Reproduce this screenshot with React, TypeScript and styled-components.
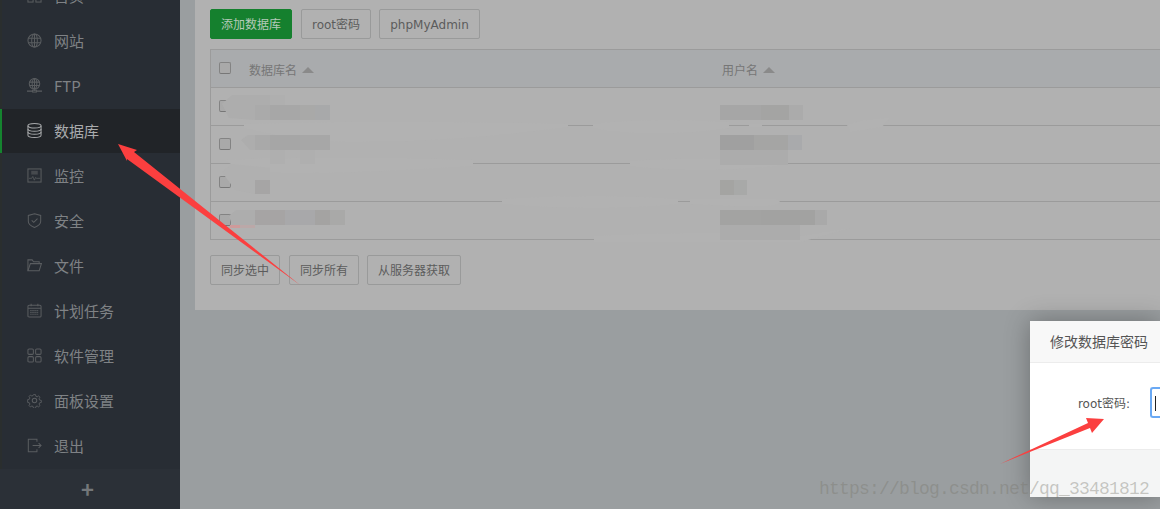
import React from "react";
import styled, { createGlobalStyle } from "styled-components";

const GlobalStyle = createGlobalStyle`
  html, body {
    margin: 0;
    padding: 0;
    height: 509px;
    overflow: hidden;
    background: #9a9ea0;
    font-family: "Noto Sans CJK SC", "Open Sans", sans-serif;
  }
`;

const Page = styled.div`
  position: relative;
  display: flex;
  width: 1160px;
  height: 509px;
  overflow: hidden;
  background: #9a9ea0;
`;

const Sidebar = styled.aside`
  display: flex;
  flex-direction: column;
  flex: 0 0 180px;
  height: 509px;
  overflow: hidden;
  background: #282d34;
`;

const Nav = styled.nav`
  flex: 1;
  margin-top: -26px;
  border-left: 2px solid #2a2e2e;
`;

const NavItem = styled.div<{ $active?: boolean }>`
  display: flex;
  align-items: center;
  gap: 11px;
  box-sizing: border-box;
  height: ${(p) => (p.$active ? "44px" : "45px")};
  margin-bottom: ${(p) => (p.$active ? "1px" : "0")};
  margin-left: ${(p) => (p.$active ? "-2px" : "0")};
  padding: ${(p) => (p.$active ? "0 0 1px 25px" : "0 0 2px 25px")};
  border-left: ${(p) => (p.$active ? "2px solid #15842f" : "0")};
  background: ${(p) => (p.$active ? "#212428" : "transparent")};
  color: ${(p) => (p.$active ? "#a9abad" : "#7f8285")};
  font-size: 15px;

  svg {
    flex: 0 0 15px;
    width: 15px;
    height: 15px;
    margin-right: 1px;
    color: ${(p) => (p.$active ? "#a5a7a9" : "#5a5d60")};
  }
`;

const SideFooter = styled.div`
  display: flex;
  flex: 0 0 41px;
  align-items: center;
  justify-content: center;
  box-sizing: border-box;
  padding: 0 5px 4px 0;
  background: #2b3037;
  color: #74777a;
  font-size: 22px;
  font-weight: 700;
`;

const Main = styled.main`
  flex: 1;
  padding-left: 15px;
`;

const Card = styled.section`
  height: 310px;
  box-sizing: border-box;
  padding: 9px 0 0 15px;
  background: #b1b1b1;
`;

const Toolbar = styled.div`
  display: flex;
  gap: 8px;
  height: 30px;

  & > :first-child {
    margin-right: 1px;
  }
`;

const Button = styled.div<{ $primary?: boolean; $w: number }>`
  display: flex;
  align-items: center;
  justify-content: center;
  box-sizing: border-box;
  width: ${(p) => p.$w}px;
  height: 30px;
  padding-top: 2px;
  border: 1px solid ${(p) => (p.$primary ? "#15802e" : "#999a9a")};
  border-radius: 2px;
  background: ${(p) => (p.$primary ? "#15802e" : "transparent")};
  color: ${(p) => (p.$primary ? "#b5c9b9" : "#5c5c5c")};
  font-family: "DejaVu Sans", "Noto Sans CJK SC", sans-serif;
  font-size: 12px;
  line-height: 18px;
  white-space: nowrap;
`;

const Table = styled.div`
  margin-top: 10px;
  border: solid #9b9b9b;
  border-width: 1px 0 1px 1px;
`;

const Row = styled.div<{ $head?: boolean }>`
  display: flex;
  align-items: center;
  gap: 18px;
  box-sizing: border-box;
  height: 38px;
  padding-left: 8px;
  background: ${(p) => (p.$head ? "#a9abad" : "transparent")};
  border-bottom: 1px solid #9b9b9b;
  color: #767676;
  font-size: 12px;

  &:last-child {
    border-bottom: 0;
    height: 37px;
  }
`;

const Check = styled.span`
  flex: 0 0 12px;
  box-sizing: border-box;
  width: 12px;
  height: 12px;
  margin-top: -2px;
  border: 1px solid #838383;
  border-bottom-color: #777;
  border-radius: 2px;
  background: #a9a9a9;
`;

const NameCell = styled.div`
  display: flex;
  align-items: center;
  gap: 5px;
  width: 455px;
  padding-top: 2px;
`;

const SortCaret = styled.span`
  width: 0;
  height: 0;
  border: solid transparent;
  border-width: 0 6px 6px;
  border-bottom-color: #8a8a8a;
`;

const Footer = styled(Toolbar)`
  margin-top: 15px;
`;

const Smudges = styled.svg`
  position: absolute;
  top: 0;
  left: 0;
  pointer-events: none;
`;

const Modal = styled.div`
  position: absolute;
  top: 321px;
  left: 1030px;
  display: flex;
  flex-direction: column;
  width: 130px;
  height: 176px;
  overflow: hidden;
  background: #fff;
  box-shadow: 0 0 24px rgba(0, 0, 0, 0.3);
`;

const ModalTitle = styled.div`
  box-sizing: border-box;
  flex: 0 0 42px;
  padding-left: 20px;
  border-bottom: 1px solid #ececec;
  background: #f8f8f8;
  color: #555;
  font-size: 14px;
  line-height: 41px;
  white-space: nowrap;
`;

const ModalBody = styled.div`
  display: flex;
  flex: 1;
  align-items: center;
  justify-content: flex-end;
  padding-bottom: 7px;
`;

const FieldLabel = styled.label`
  margin: 2px 20px 0 0;
  color: #555;
  font-family: "DejaVu Sans", "Noto Sans CJK SC", sans-serif;
  font-size: 12px;
  line-height: 18px;
  white-space: nowrap;
`;

const Input = styled.div`
  box-sizing: border-box;
  flex: 0 0 10px;
  width: 10px;
  height: 31px;
  padding: 7px 0 0 3px;
  border: solid #6aa9f4;
  border-width: 2px 0 2px 2px;
  border-radius: 3px 0 0 3px;
`;

const Caret = styled.span`
  display: block;
  width: 1px;
  height: 15px;
  background: #222;
`;

const ModalFooter = styled.div`
  flex: 0 0 47px;
  border-top: 1px solid #ececec;
  background: #f4f5f5;
`;

const Watermark = styled.div`
  position: absolute;
  top: 478px;
  left: 819px;
  color: rgba(120, 118, 108, 0.38);
  font-family: "Liberation Mono", monospace;
  font-size: 18px;
  letter-spacing: -0.8px;
  line-height: 22px;
  white-space: nowrap;
`;

const Arrows = styled.svg`
  position: absolute;
  top: 0;
  left: 0;
  pointer-events: none;
`;

const Icon = ({ children }: { children: React.ReactNode }) => (
  <svg viewBox="0 0 16 16" fill="none" stroke="currentColor" strokeWidth="1.1">
    {children}
  </svg>
);

const navItems: { label: string; icon: React.ReactNode; active?: boolean }[] = [
  {
    label: "首页",
    icon: (
      <Icon>
        <rect x="1" y="1" width="5.5" height="5.5" />
        <rect x="9.5" y="1" width="5.5" height="5.5" />
        <rect x="1" y="9.5" width="5.5" height="5.5" />
        <rect x="9.5" y="9.5" width="5.5" height="5.5" />
      </Icon>
    ),
  },
  {
    label: "网站",
    icon: (
      <Icon>
        <circle cx="8" cy="8" r="7" />
        <ellipse cx="8" cy="8" rx="3" ry="7" />
        <path d="M8 1v14M1.4 5.5h13.2M1.4 10.5h13.2" />
      </Icon>
    ),
  },
  {
    label: "FTP",
    icon: (
      <Icon>
        <circle cx="8" cy="6.2" r="5.6" />
        <ellipse cx="8" cy="6.2" rx="2.5" ry="5.6" />
        <path d="M8 .6v11.2M2.8 4.4h10.4M2.8 8h10.4M8 12v1.6M0 14h6M10 14h6" />
        <rect x="6" y="13" width="4" height="2" />
      </Icon>
    ),
  },
  {
    label: "数据库",
    active: true,
    icon: (
      <Icon>
        <ellipse cx="8" cy="3" rx="7" ry="2.4" />
        <path d="M1 3v10c0 1.3 3.1 2.4 7 2.4s7-1.1 7-2.4V3" />
        <path d="M1 6.3c0 1.3 3.1 2.4 7 2.4s7-1.1 7-2.4M1 9.6c0 1.3 3.1 2.4 7 2.4s7-1.1 7-2.4" />
      </Icon>
    ),
  },
  {
    label: "监控",
    icon: (
      <Icon>
        <rect x="1" y="1" width="14" height="14" />
        <rect x="4.5" y="3" width="7" height="4" fill="currentColor" stroke="none" opacity="0.6" />
        <path d="M2 11h3l1.2-2 1.6 4 1.4-3 .8 1H14" strokeWidth="0.8" />
      </Icon>
    ),
  },
  {
    label: "安全",
    icon: (
      <Icon>
        <path d="M8 .8 14.6 2.6v6.2c0 3-3.2 5.3-6.6 6.6C4.6 14.1 1.4 11.8 1.4 8.8V2.6Z" />
        <path d="m5 7.8 2.2 2.2 4-4" />
      </Icon>
    ),
  },
  {
    label: "文件",
    icon: (
      <Icon>
        <path d="M1 13.6V2h4.5l1.5 2h6v2" />
        <path d="M1 13.6 3.6 6H15.4l-2.4 7.6Z" />
      </Icon>
    ),
  },
  {
    label: "计划任务",
    icon: (
      <Icon>
        <rect x="1" y="2.4" width="14" height="12.6" rx="1.2" />
        <path d="M1 5.6h14M4.4.8v2.6M11.6.8v2.6" />
        <path d="M3.5 8h9M3.5 10h9M3.5 12h9" strokeDasharray="1.4 .8" />
      </Icon>
    ),
  },
  {
    label: "软件管理",
    icon: (
      <Icon>
        <rect x="1" y="1" width="5.8" height="5.8" rx="1.2" />
        <rect x="9.2" y="1" width="5.8" height="5.8" rx="1.2" />
        <rect x="1" y="9.2" width="5.8" height="5.8" rx="1.2" />
        <rect x="9.2" y="9.2" width="5.8" height="5.8" rx="1.2" />
      </Icon>
    ),
  },
  {
    label: "面板设置",
    icon: (
      <Icon>
        <circle cx="8" cy="8" r="2.4" />
        <path d="M6.8 1h2.4l.4 2 1.5.7 1.8-1.1 1.6 1.6-1.1 1.8.7 1.5 2 .4v2.4l-2 .4-.7 1.5 1.1 1.8-1.6 1.6-1.8-1.1-1.5.7-.4 2H6.8l-.4-2-1.5-.7-1.8 1.1-1.6-1.6 1.1-1.8-.7-1.5-2-.4V6.9l2-.4.7-1.5-1.1-1.8 1.6-1.6 1.8 1.1 1.5-.7Z" transform="translate(.8 .8) scale(.9)" />
      </Icon>
    ),
  },
  {
    label: "退出",
    icon: (
      <Icon>
        <path d="M10.6 4V1.4H1.4v13.2h9.2V12" />
        <path d="M6 8h9M12.4 5.4 15 8l-2.6 2.6" />
      </Icon>
    ),
  },
];

// mosaic blocks from the screenshot's redaction: x, y, width, height, colour
const mosaic: [number, number, number, number, string][] = [
  [270, 95, 15, 10, "#afafaf"],
  [255, 105, 15, 15, "#aaaaaa"],
  [270, 105, 30, 15, "#a7a7a7"],
  [300, 105, 15, 15, "#a9a9a8"],
  [315, 105, 15, 15, "#a8a9aa"],
  [255, 135, 15, 15, "#a9a9a9"],
  [270, 135, 30, 15, "#a6a6a6"],
  [300, 135, 30, 15, "#a7a7a7"],
  [270, 150, 15, 14, "#afafaf"],
  [300, 150, 15, 14, "#afafaf"],
  [255, 180, 15, 14, "#a6a5a5"],
  [255, 210, 30, 15, "#a6a4a4"],
  [285, 210, 30, 15, "#a8a8aa"],
  [315, 210, 15, 15, "#a4a3a2"],
  [330, 210, 15, 15, "#a9a9a8"],
  [230, 225, 10, 3, "#cf9a9a"],
  [240, 225, 15, 3, "#bba8a8"],
  [720, 105, 41, 15, "#a6a6a6"],
  [761, 105, 28, 15, "#a4a4a3"],
  [789, 105, 14, 15, "#ababab"],
  [720, 135, 34, 15, "#a0a0a0"],
  [754, 135, 34, 15, "#a5a5a4"],
  [788, 135, 14, 15, "#a9aaac"],
  [720, 150, 68, 15, "#acacac"],
  [720, 180, 14, 15, "#a4a4a2"],
  [734, 180, 13, 15, "#a8a9a8"],
  [720, 210, 41, 15, "#a3a3a2"],
  [761, 210, 54, 15, "#a2a2a1"],
  [815, 210, 12, 15, "#a9a9a9"],
  [720, 225, 80, 15, "#acacac"],
];

const App = () => {
  return (
    <Page>
      <GlobalStyle />
      <Sidebar>
        <Nav>
          {navItems.map((item) => (
            <NavItem key={item.label} $active={item.active}>
              {item.icon}
              <span>{item.label}</span>
            </NavItem>
          ))}
        </Nav>
        <SideFooter>+</SideFooter>
      </Sidebar>
      <Main>
        <Card>
          <Toolbar>
            <Button $primary $w={82}>添加数据库</Button>
            <Button $w={70}>root密码</Button>
            <Button $w={101}>phpMyAdmin</Button>
          </Toolbar>
          <Table>
            <Row $head>
              <Check />
              <NameCell>数据库名<SortCaret /></NameCell>
              <NameCell>用户名<SortCaret /></NameCell>
            </Row>
            <Row><Check /></Row>
            <Row><Check /></Row>
            <Row><Check /></Row>
            <Row><Check /></Row>
          </Table>
          <Footer>
            <Button $w={70}>同步选中</Button>
            <Button $w={70}>同步所有</Button>
            <Button $w={94}>从服务器获取</Button>
          </Footer>
        </Card>
      </Main>

      <Smudges width="1160" height="509">
        <g fill="#b2b2b2">
          <path d="M244 124 C 360 120 480 122 568 124 L 568 127 C 500 136 400 146 300 140 L 244 128 Z" />
          <path d="M593 124 C 640 118 690 120 729 122 L 729 128 C 680 136 620 134 593 128 Z" />
          <path d="M749 124 H762 V127 H749 Z" />
          <path d="M847 125 C 860 120 880 118 890 118 L 882 127 L 850 132 Z" />
          <path d="M225 160 C 300 156 420 158 473 160 L 473 166 C 380 172 280 176 240 170 Z" />
          <path d="M630 161 C 680 158 740 158 777 160 L 777 166 C 720 172 660 170 630 166 Z" />
          <path d="M502 199 C 570 194 640 196 678 199 L 678 204 C 620 210 550 208 502 204 Z" />
          <path d="M690 199 H775 C 790 204 770 208 730 206 L 690 204 Z" />
          <path d="M594 236 C 660 232 760 232 801 236 L 850 228 L 801 242 L 594 242 Z" />
        </g>
        <path d="M222 104 L 232 95 L 270 95 L 285 105 L 255 120 L 229 118 Z" fill="#adadad" />
        <path d="M241 140 L 248 135 L 256 135 L 256 150 L 250 150 Z" fill="#adadad" />
        <path d="M222 172 L 232 164 L 270 168 L 270 180 L 255 194 L 235 190 Z" fill="#b0b0b0" />
        <path d="M229 216 L 236 210 L 256 210 L 256 225 L 232 225 Z" fill="#adadad" />
        {mosaic.map(([x, y, w, h, fill]) => (
          <rect key={`${x}-${y}`} x={x} y={y} width={w} height={h} fill={fill} />
        ))}
      </Smudges>

      <Modal>
        <ModalTitle>修改数据库密码</ModalTitle>
        <ModalBody>
          <FieldLabel>root密码:</FieldLabel>
          <Input><Caret /></Input>
        </ModalBody>
        <ModalFooter />
      </Modal>

      <Watermark>https://blog.csdn.net/qq_33481812</Watermark>

      <Arrows width="1160" height="509">
        <path d="M118 144 L137 150 L134 152 L300 285 L127 159 L127 161 Z" fill="#fb3f3f" />
        <path d="M1104 419 L1086 418 L1088 423 L1000 464 L1090 428 L1092 433 Z" fill="#fb3f3f" />
      </Arrows>
    </Page>
  );
};

export default App;
